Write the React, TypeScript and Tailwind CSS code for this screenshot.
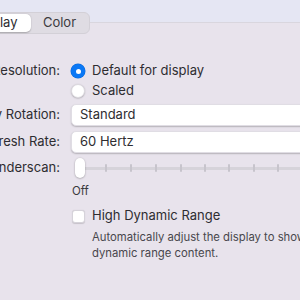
import React from 'react';

const font = { fontFamily: 'Inter, "Liberation Sans", sans-serif' };

const Label = ({ children }: { children: React.ReactNode }) => (
  <div className="w-[100px] shrink-0 flex justify-end whitespace-nowrap text-[13px] text-[#2e2d31]">
    {children}
  </div>
);

const Radio = ({ on }: { on?: boolean }) =>
  on ? (
    <span className="w-[14px] h-[14px] rounded-full bg-[#0b78f5] flex items-center justify-center shadow-[0_0_0_0.5px_#0a6ad8]">
      <span className="w-[5px] h-[5px] rounded-full bg-white" />
    </span>
  ) : (
    <span className="w-[14px] h-[14px] rounded-full bg-white shadow-[0_0.5px_1.5px_rgba(0,0,0,0.25)] border border-[#dcd9df]" />
  );

const Select = ({ value }: { value: string }) => (
  <div className="flex-1 h-[22px] rounded-[5px] bg-white shadow-[0_1px_1.5px_rgba(0,0,0,0.22)] border border-[#e0dde4] flex items-center pl-[8px] text-[13px] text-[#2e2d31]">
    {value}
  </div>
);

const ticks = [105, 130, 155, 180, 204, 228, 253, 277, 301, 326];

export default function App() {
  return (
    <div style={font} className="w-[300px] h-[300px] overflow-hidden relative bg-[#e8e3ec]">
      <div className="h-[23px] bg-[#e5e6f3] border-b border-[#d9d6de]" />

      {/* segmented tabs sit over the panel edge */}
      <div className="absolute top-[12px] left-[-43px] h-[22px] flex rounded-[6px] bg-[#dfdce3] border border-[#d3d0d7] p-[1px]">
        <div className="w-[72px] rounded-[5px] bg-white shadow-[0_0.5px_1.5px_rgba(0,0,0,0.25)] flex items-center justify-center text-[13px] text-[#2e2d31]">
          Display
        </div>
        <div className="w-[57px] flex items-center justify-center text-[13px] text-[#3b3a3e]">Color</div>
      </div>

      <div className="ml-[-40px] pt-[38px] flex flex-col">
        <div className="flex items-center gap-[11px] h-[20px]">
          <Label>Resolution:</Label>
          <div className="flex items-center gap-[7px]">
            <Radio on />
            <span className="text-[13px] text-[#2e2d31]">Default for display</span>
          </div>
        </div>
        <div className="flex items-center gap-[11px] h-[20px]">
          <div className="w-[100px] shrink-0" />
          <div className="flex items-center gap-[7px]">
            <Radio />
            <span className="text-[13px] text-[#2e2d31]">Scaled</span>
          </div>
        </div>

        <div className="flex items-center gap-[11px] h-[22px] mt-[3px] mr-[-30px]">
          <Label>Display Rotation:</Label>
          <Select value="Standard" />
        </div>
        <div className="flex items-center gap-[11px] h-[22px] mt-[5px] mr-[-30px]">
          <Label>Refresh Rate:</Label>
          <Select value="60 Hertz" />
        </div>

        <div className="flex items-center gap-[11px] h-[20px] mt-[5px]">
          <Label>Underscan:</Label>
          <div className="relative flex-1 h-[20px] flex items-center">
            <div className="absolute left-[6px] right-[-40px] h-[3px] rounded-full bg-[#d6d3da]" />
            {ticks.map((x) => (
              <div
                key={x}
                className="absolute w-[2px] h-[8px] rounded-[1px] bg-[#c7c4cc]"
                style={{ left: x - 71 }}
              />
            ))}
            <div className="relative ml-[4px] w-[10px] h-[20px] rounded-full bg-white shadow-[0_0.5px_2px_rgba(0,0,0,0.35)]" />
          </div>
        </div>
        <div className="flex items-center h-[18px] mt-[5px]">
          <div className="w-[112px] shrink-0" />
          <span className="text-[11.5px] text-[#3b3a3e]">Off</span>
        </div>

        <div className="flex items-center gap-[7px] h-[20px] mt-[5px] pl-[112px]">
          <span className="w-[13px] h-[13px] rounded-[3px] bg-white border border-[#d6d3da] shadow-[0_0.5px_1px_rgba(0,0,0,0.15)]" />
          <span className="text-[13px] text-[#2e2d31]">High Dynamic Range</span>
        </div>
        <div className="pl-[132px] mt-[3px] text-[11.3px] leading-[16px] text-[#48474c] whitespace-nowrap">
          <div>Automatically adjust the display to show high</div>
          <div>dynamic range content.</div>
        </div>
      </div>
    </div>
  );
}
